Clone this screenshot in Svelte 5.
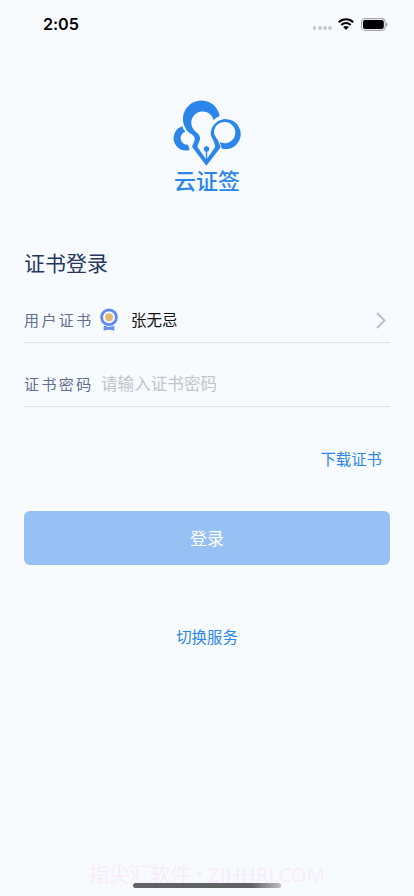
<script lang="ts">
	let user = '张无忌';
	let password = '';
	let dots = [0, 1, 2, 3];
</script>

<div class="page">
	<header class="status-bar">
		<span class="time">2:05</span>
		<div class="status-icons">
			<div class="signal">
				{#each dots as dot (dot)}
					<i></i>
				{/each}
			</div>
			<svg class="wifi" viewBox="0 0 16 12" width="16" height="12">
				<path d="M0.8 4.3C4.8 0.3 11.2 0.3 15.2 4.3" />
				<path d="M3.3 6.9C6 4.3 10 4.3 12.7 6.9" />
				<path class="fill" d="M5.2 9.1C6.8 7.7 9.2 7.7 10.8 9.1L8 12Z" />
			</svg>
			<svg class="battery" viewBox="0 0 27 13" width="27" height="13">
				<rect class="shell" x="0.6" y="0.6" width="23.6" height="11.8" rx="3.4" />
				<rect x="2" y="2" width="20.8" height="9" rx="2" />
				<path class="tip" d="M25.2 4.4C26.8 5 26.8 8 25.2 8.6Z" />
			</svg>
		</div>
	</header>

	<div class="brand">
		<svg class="logo" viewBox="24 24 204 198" width="68" height="66">
			<path d="M164 72A55.5 55.5 0 1 0 73 123C87 130 92 137 88 147L81 164L124 221L167 166L160 148C156 140 149 132 147 124A32 32 0 1 1 164 150L171 170A45 45 0 1 0 137 127C139 137 147 146 148 154L151 164L124 203L97 164L103 148C108 136 104 128 93 120A34 34 0 1 1 146 85Q153 76 164 72Z" />
			<path d="M52 103A36.5 36.5 0 0 0 74 174L69 158A20 20 0 0 1 61 119Q54 112 52 103Z" />
			<path d="M122.5 174H126.5V206L124.5 209L122.5 206Z" />
			<circle cx="124.5" cy="171" r="8" />
		</svg>
		<div class="brand-name">云证签</div>
	</div>

	<main>
		<h1>证书登录</h1>

		<div class="field">
			<span class="label">用户证书</span>
			<svg class="medal" viewBox="0 0 18 24" width="18" height="24">
				<path d="M3.7 18H14.3V22.8Q9 20.8 3.7 22.8Z" />
				<circle class="gap" cx="9" cy="9.3" r="9.8" />
				<circle class="ring" cx="9" cy="9.3" r="7.4" />
				<circle class="core" cx="9" cy="9.3" r="4" />
			</svg>
			<span class="user">{user}</span>
			<svg class="arrow" viewBox="0 0 10 17" width="10" height="17">
				<path d="M1 1L8.6 8.5L1 16" />
			</svg>
		</div>

		<div class="field second">
			<span class="label">证书密码</span>
			<input type="password" placeholder="请输入证书密码" bind:value={password} />
		</div>

		<a class="download" href="#download">下载证书</a>

		<button class="login">登录</button>

		<a class="switch" href="#switch">切换服务</a>
	</main>

	<footer>
		<div class="watermark">指尖汇软件 • ZJHHRJ.COM</div>
		<div class="home-bar"></div>
	</footer>
</div>

<style>
	:global(body) {
		margin: 0;
		background: #f7fbff;
	}

	.page {
		display: flex;
		flex-direction: column;
		box-sizing: border-box;
		width: 100%;
		height: 896px;
		overflow: hidden;
		background: #f7fbff;
		font-family: 'Noto Sans CJK SC', sans-serif;
	}

	.status-bar {
		display: flex;
		align-items: center;
		justify-content: space-between;
		height: 48px;
		padding: 0 26px 0 43px;
	}

	.time {
		font-family: Inter, sans-serif;
		font-size: 16.2px;
		font-weight: 600;
		letter-spacing: -0.1px;
		color: #000;
	}

	.status-icons {
		display: flex;
		align-items: center;
	}

	.signal {
		display: flex;
		gap: 1.4px;
		margin: 8px 6px 0 0;
	}

	.signal i {
		width: 3.8px;
		height: 3.8px;
		border-radius: 50%;
		background: #c5c8cc;
	}

	.wifi {
		margin-right: 7px;
		fill: none;
		stroke: #000;
		stroke-width: 2.1;
	}

	.wifi .fill {
		fill: #000;
		stroke: none;
	}

	.battery .shell {
		fill: none;
		stroke: #a5a7aa;
		stroke-width: 1.1;
	}

	.battery .tip {
		fill: #85878a;
	}

	.brand {
		display: flex;
		flex-direction: column;
		align-items: center;
		margin-top: 52px;
		height: 92px;
		color: #2b85ea;
	}

	.logo {
		flex: none;
		fill: #2b85ea;
	}

	.brand-name {
		font-size: 22px;
		font-weight: 500;
		line-height: 26px;
	}

	main {
		display: flex;
		flex-direction: column;
		padding: 0 24px;
	}

	h1 {
		margin: 54px 0 0;
		font-size: 21px;
		font-weight: 400;
		line-height: 32px;
		color: #263760;
	}

	.field {
		display: flex;
		align-items: center;
		box-sizing: border-box;
		height: 45px;
		margin-top: 20px;
		border-bottom: 1px solid #dde2e9;
	}

	.second {
		margin-top: 19px;
	}

	.label,
	.user,
	input {
		margin-bottom: 2px;
	}

	.label {
		width: 77px;
		font-size: 15px;
		letter-spacing: 2.4px;
		color: #626d91;
	}

	.medal {
		margin-left: -1px;
		overflow: visible;
		fill: #6590f8;
	}

	.medal .gap {
		fill: #f7fbff;
	}

	.medal .ring {
		fill: none;
		stroke: #6088f8;
		stroke-width: 2.8;
	}

	.medal .core {
		fill: #dfb873;
	}

	.user {
		margin-left: 13px;
		font-size: 15.5px;
		color: #111;
	}

	.arrow {
		margin: 0 4px 0 auto;
		fill: none;
		stroke: #b7bdc9;
		stroke-width: 1.8;
	}

	input {
		flex: 1;
		min-width: 0;
		padding: 0;
		border: 0;
		outline: 0;
		background: none;
		font-family: inherit;
		font-size: 16.6px;
	}

	input::placeholder {
		color: #c2c5ca;
		opacity: 1;
	}

	a {
		font-size: 15.4px;
		line-height: 24px;
		text-decoration: none;
		color: #2b85ea;
	}

	.download {
		align-self: flex-end;
		margin: 39px 8px 0 0;
	}

	.login {
		height: 54px;
		margin-top: 41px;
		padding: 0 0 2px;
		border: 0;
		border-radius: 6px;
		background: #97c0f4;
		font-family: inherit;
		font-size: 17px;
		color: #fff;
	}

	.switch {
		align-self: center;
		margin-top: 59px;
	}

	footer {
		display: flex;
		flex-direction: column;
		align-items: center;
		margin-top: auto;
		height: 36px;
	}

	.watermark {
		font-family: 'Noto Sans', 'Noto Sans CJK SC', sans-serif;
		font-size: 20.3px;
		line-height: 28px;
		white-space: nowrap;
		color: #f9ecfa;
	}

	.home-bar {
		position: relative;
		width: 148px;
		height: 5px;
		margin-top: -5px;
		border-radius: 3px;
		background: linear-gradient(90deg, #626364 80%, #bcbec1);
	}
</style>
